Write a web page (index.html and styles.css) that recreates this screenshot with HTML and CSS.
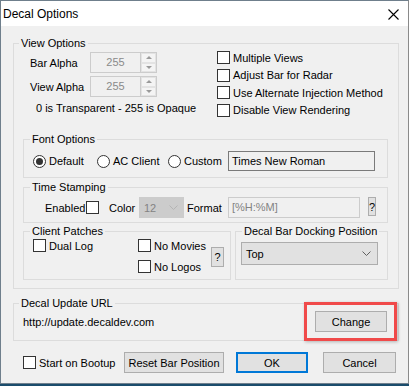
FILE: index.html
```html
<!DOCTYPE html>
<html>
  <head>
    <title>Decal Options</title>
    <link rel="stylesheet" href="styles.css">
  </head>
  <body>
    <div class="window">
      <div class="titlebar">
        <span class="title">Decal Options</span>
        <svg class="close" width="11" height="11" viewBox="0 0 11 11">
          <path d="M0.5 0.5 L10.5 10.5 M10.5 0.5 L0.5 10.5" stroke="#000" stroke-width="1.1" fill="none" />
        </svg>
      </div>

      <div class="dialog">
        <fieldset class="group view-group">
          <legend>View Options</legend>
          <div class="view-top">
            <div class="alpha-col">
              <div class="spin-row">
                <span class="spin-label">Bar Alpha</span>
                <div class="spin">
                  <span class="spin-value">255</span>
                  <span class="spin-btns"><span class="spin-btn up"></span><span class="spin-btn down"></span></span>
                </div>
              </div>
              <div class="spin-row second">
                <span class="spin-label">View Alpha</span>
                <div class="spin">
                  <span class="spin-value">255</span>
                  <span class="spin-btns"><span class="spin-btn up"></span><span class="spin-btn down"></span></span>
                </div>
              </div>
              <div class="note">0 is Transparent - 255 is Opaque</div>
            </div>
            <div class="view-checks">
              <label class="check"><span class="box"></span>Multiple Views</label>
              <label class="check"><span class="box"></span>Adjust Bar for Radar</label>
              <label class="check"><span class="box"></span>Use Alternate Injection Method</label>
              <label class="check"><span class="box"></span>Disable View Rendering</label>
            </div>
          </div>

          <fieldset class="group inner font-group">
            <legend>Font Options</legend>
            <div class="font-row">
              <label class="radio r-default"><span class="dot checked"></span>Default</label>
              <label class="radio r-ac"><span class="dot"></span>AC Client</label>
              <label class="radio r-custom"><span class="dot"></span>Custom</label>
              <div class="field font-field">Times New Roman</div>
            </div>
          </fieldset>

          <fieldset class="group inner time-group">
            <legend>Time Stamping</legend>
            <div class="time-row">
              <span class="enabled-label">Enabled</span>
              <span class="box"></span>
              <span class="color-label">Color</span>
              <div class="combo disabled color-combo">
                <span>12</span>
                <svg class="chev" width="9" height="5" viewBox="0 0 9 5"><path d="M0.5 0.5 L4.5 4.5 L8.5 0.5" stroke="#b4b4b4" fill="none" /></svg>
              </div>
              <span class="format-label">Format</span>
              <div class="field disabled format-field">[%H:%M]</div>
              <button class="btn help-small">?</button>
            </div>
          </fieldset>

          <div class="lower-row">
            <fieldset class="group inner client-group">
              <legend>Client Patches</legend>
              <div class="client-body">
                <div class="client-left">
                  <label class="check"><span class="box"></span>Dual Log</label>
                </div>
                <div class="client-mid">
                  <label class="check"><span class="box"></span>No Movies</label>
                  <label class="check"><span class="box"></span>No Logos</label>
                </div>
                <button class="btn help-tall">?</button>
              </div>
            </fieldset>
            <fieldset class="group inner dock-group">
              <legend>Decal Bar Docking Position</legend>
              <div class="combo dock-combo">
                <span>Top</span>
                <svg class="chev" width="9" height="5" viewBox="0 0 9 5"><path d="M0.5 0.5 L4.5 4.5 L8.5 0.5" stroke="#606060" fill="none" /></svg>
              </div>
            </fieldset>
          </div>
        </fieldset>

        <fieldset class="group url-group">
          <legend>Decal Update URL</legend>
          <div class="url-row">
            <span class="url">http://update.decaldev.com</span>
            <div class="change-wrap">
              <button class="btn change">Change</button>
            </div>
          </div>
        </fieldset>

        <div class="bottom-row">
          <label class="check bootup"><span class="box"></span>Start on Bootup</label>
          <button class="btn reset">Reset Bar Position</button>
          <button class="btn ok">OK</button>
          <button class="btn cancel">Cancel</button>
        </div>
      </div>
    </div>
  </body>
</html>
```
FILE: styles.css
```css
html,
body {
  margin: 0;
  padding: 0;
  background: #1a4c6c;
  overflow: hidden;
}

.window {
  width: 409px;
  height: 384px;
  box-sizing: border-box;
  border: 1px solid #6f7f8c;
  border-right-color: #8a8a8a;
  background: #f0f0f0;
  font-family: "Liberation Sans", Arial, sans-serif;
  font-size: 11px;
  color: #000;
}

/* title bar */
.titlebar {
  height: 25px;
  background: #fff;
  display: flex;
  align-items: center;
  padding-left: 2px;
}
.title {
  font-size: 12px;
  margin-top: 1px;
}
.close {
  margin-left: auto;
  margin-right: 9px;
  margin-top: 1px;
}

/* group boxes */
.group {
  border: 1px solid #dcdcdc;
  margin: 0;
  padding: 0;
  min-width: 0;
  box-sizing: border-box;
}
.group > legend {
  padding: 0 2px;
  margin-left: 5px;
  line-height: 13px;
  height: 13px;
}
.group.inner > legend {
  margin-left: 6px;
}

.view-group {
  margin: 11px 0 0 12px;
  width: 386px;
  padding: 0 10px 8px 9px;
}
.view-group > legend {
  margin-left: -4px;
}

.view-top {
  height: 83px;
  display: flex;
  padding-left: 7px;
}
.alpha-col {
  width: 187px;
}
.spin-row {
  display: flex;
  align-items: center;
  height: 21px;
  margin-top: 2px;
}
.spin-row.second {
  margin-top: 3px;
}
.spin-label {
  width: 60px;
}
.spin {
  display: flex;
  height: 21px;
}
.spin-value {
  width: 51px;
  box-sizing: border-box;
  border: 1px solid #cccccc;
  color: #8a8a8a;
  text-align: center;
  line-height: 19px;
}
.spin-btns {
  display: flex;
  flex-direction: column;
  width: 16px;
  border: 1px solid #cccccc;
  border-left: none;
  box-sizing: border-box;
}
.spin-btn {
  flex: 1;
  display: flex;
  align-items: center;
  justify-content: center;
  background: #f4f4f4;
  border: 1px solid #e3e3e3;
}
.spin-btn.up::before,
.spin-btn.down::before {
  content: "";
  border-left: 3px solid transparent;
  border-right: 3px solid transparent;
}
.spin-btn.up::before {
  border-bottom: 3px solid #9a9a9a;
}
.spin-btn.down::before {
  border-top: 3px solid #9a9a9a;
}
.note {
  margin: 5px 0 0 6px;
  line-height: 13px;
}

.view-checks {
  margin-top: -1px;
}
.check {
  display: flex;
  align-items: center;
  height: 17.5px;
  white-space: nowrap;
}
.box {
  width: 13px;
  height: 13px;
  box-sizing: border-box;
  border: 1px solid #333;
  background: #fff;
  margin-right: 3px;
  flex-shrink: 0;
}

/* font options */
.font-group {
  width: 365px;
}
.font-row {
  display: flex;
  align-items: center;
  height: 20px;
  margin: 5px 0 6px;
  padding-left: 9px;
}
.radio {
  display: flex;
  align-items: center;
}
.r-default {
  width: 64px;
}
.r-ac {
  width: 71px;
}
.r-custom {
  width: 60px;
}
.dot {
  width: 13px;
  height: 13px;
  box-sizing: border-box;
  border: 1px solid #333;
  border-radius: 50%;
  background: #fff;
  margin-right: 3px;
  display: flex;
  align-items: center;
  justify-content: center;
}
.dot.checked::after {
  content: "";
  width: 7px;
  height: 7px;
  border-radius: 50%;
  background: #333;
}
.field {
  height: 20px;
  box-sizing: border-box;
  border: 1px solid #7a7a7a;
  line-height: 18px;
  padding-left: 3px;
}
.font-field {
  width: 147px;
}

/* time stamping */
.time-group {
  width: 365px;
  margin-top: 3px;
}
.time-row {
  display: flex;
  align-items: center;
  height: 21px;
  margin: 3px 0 4px;
  padding-left: 21px;
}
.enabled-label {
  width: 41px;
}
.color-label {
  margin-left: 7px;
  width: 30px;
}
.combo {
  height: 21px;
  box-sizing: border-box;
  display: flex;
  align-items: center;
  padding-left: 4px;
  padding-right: 5px;
  justify-content: space-between;
  border: 1px solid #adadad;
  background: #e1e1e1;
}
.combo.disabled {
  background: #cccccc;
  border-color: #cccccc;
  color: #838383;
}
.color-combo {
  width: 45px;
}
.format-label {
  margin-left: 3px;
  width: 41px;
}
.field.disabled {
  border-color: #cccccc;
  color: #838383;
  height: 21px;
}
.format-field {
  width: 132px;
}

.btn {
  font-family: inherit;
  font-size: 11px;
  color: #000;
  background: #e1e1e1;
  border: 1px solid #adadad;
  box-sizing: border-box;
  padding: 0;
  margin: 0;
  height: 21px;
}
.help-small {
  width: 8px;
  height: 19px;
  margin-left: 8px;
  margin-top: -2px;
}

/* client patches + docking */
.lower-row {
  display: flex;
  margin-top: 2px;
}
.client-group {
  width: 208px;
}
.client-body {
  display: flex;
  height: 41px;
}
.client-left {
  padding-left: 9px;
  width: 105px;
}
.client-left .check,
.client-mid .check {
  height: 13px;
  margin-top: 1px;
}
.client-mid {
  width: 73px;
  display: flex;
  flex-direction: column;
  gap: 7px;
}
.help-tall {
  width: 13px;
  height: 20px;
  margin-top: 9px;
}
.dock-group {
  width: 153px;
  margin-left: 4px;
}
.dock-combo {
  width: 137px;
  height: 23px;
  margin: 4px 0 0 5px;
  padding-right: 6px;
}

/* update url */
.url-group {
  margin: 8px 0 0 12px;
  width: 386px;
}
.url-row {
  display: flex;
  align-items: center;
  height: 21px;
  margin: 1px 0 8px;
  padding-left: 9px;
}
.change-wrap {
  margin-left: auto;
  margin-right: 11px;
  position: relative;
}
.change {
  width: 72px;
}
.change-wrap::after {
  content: "";
  position: absolute;
  left: -11px;
  right: -10px;
  top: -9px;
  bottom: -9px;
  border: 3px solid #f04a4a;
  box-shadow: 1px 1px 3px rgba(0, 0, 0, 0.25);
}

/* bottom buttons */
.bottom-row {
  display: flex;
  align-items: center;
  height: 21px;
  margin-top: 11px;
  padding-left: 22px;
}
.bootup {
  width: 101px;
}
.reset {
  width: 100px;
}
.ok {
  width: 72px;
  margin-left: 12px;
  border: 2px solid #0078d7;
}
.cancel {
  width: 73px;
  margin-left: 15px;
}
```
